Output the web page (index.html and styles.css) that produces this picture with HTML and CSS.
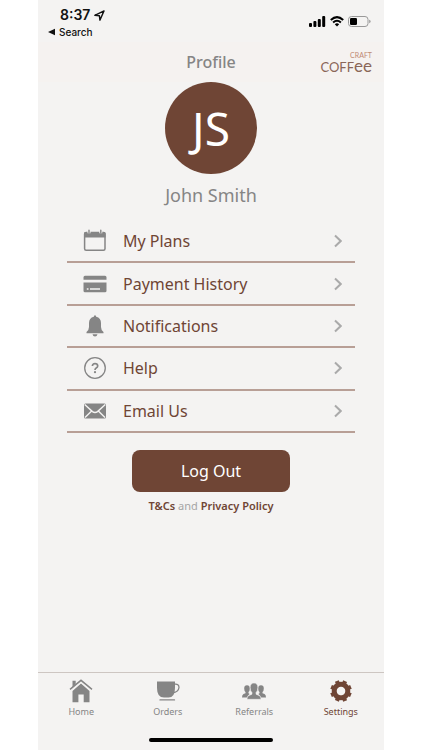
FILE: index.html
```html
<!DOCTYPE html>
<html lang="en">
<head>
<meta charset="utf-8">
<meta name="viewport" content="width=device-width, initial-scale=1">
<title>Profile</title>
<link rel="stylesheet" href="styles.css">
</head>
<body>
<div class="screen">
  <div class="status">
    <div class="status-left">
      <div class="clock">8:37
        <svg width="11" height="11" viewBox="0 0 11 11"><path d="M.8 5.3 10 .9 5.9 10.2 5.4 5.7Z" fill="none" stroke="#111" stroke-width="1.4" stroke-linejoin="round"/></svg>
      </div>
      <a class="back" href="#"><svg width="8" height="8" viewBox="0 0 8 8"><path d="M0 4 7 .8v6.4Z" fill="#111"/></svg>Search</a>
    </div>
    <div class="status-right">
      <svg width="17" height="11" viewBox="0 0 17 11"><g fill="#000"><rect x="0" y="7" width="3" height="4" rx="1"/><rect x="4.4" y="5" width="3" height="6" rx="1"/><rect x="8.8" y="3" width="3" height="8" rx="1"/><rect x="13.2" y="0" width="3" height="11" rx="1"/></g></svg>
      <svg width="14" height="11" viewBox="0 0 14 11"><g fill="none" stroke="#000" stroke-width="2"><path d="M.8 4Q7-1.8 13.2 4"/><path d="M3.1 6.5Q7 3 10.9 6.5"/></g><path d="M4.8 8.2Q7 6.5 9.2 8.2L7 10.6Z"/></svg>
      <svg width="23" height="11" viewBox="0 0 23 11"><rect x=".5" y=".5" width="19.5" height="10" rx="3" fill="none" stroke="#999"/><rect x="2" y="2" width="7" height="7" rx="1.2"/><path d="M21.2 3.8q1.4.3 1.4 1.7t-1.4 1.7Z" fill="#999"/></svg>
    </div>
  </div>
  <header class="header">
    <h1>Profile</h1>
    <div class="logo"><span class="logo-top">CRAFT</span><span class="logo-main">COFF<span class="logo-ee">ee</span></span></div>
  </header>
  <main class="main">
    <div class="avatar">JS</div>
    <h2 class="name">John Smith</h2>
    <ul class="menu">
      <li><a href="#"><svg class="icon" viewBox="0 0 24 24"><rect x="1.6" y="3.5" width="20.4" height="17.8" rx="1.5" fill="none" stroke="#858585" stroke-width="1.5"/><path d="M1 8.5V4.5Q1 3 2.5 3H21Q22.6 3 22.6 4.5V8.5Z" fill="#858585"/><path d="M6 1.8v2.4M17.8 1.8v2.4" stroke="#f4f3f2" stroke-width="3"/><path d="M6 1.3v2.4M17.8 1.3v2.4" stroke="#858585" stroke-width="1.4" stroke-linecap="round"/></svg><span>My Plans</span><svg class="chevron" viewBox="0 0 8 14"><path d="M1 1.5 6.7 7 1 12.5"/></svg></a></li>
      <li><a href="#"><svg class="icon" viewBox="0 0 24 24"><path d="M2 3.7H22Q23.5 3.7 23.5 5.2V7.7H.5V5.2Q.5 3.7 2 3.7ZM.5 10.5H23.5V18.7Q23.5 20.2 22 20.2H2Q.5 20.2.5 18.7Z" fill="#858585"/><path d="M3.8 17h1.7M7 17h10" stroke="#f4f3f2" stroke-width="1.3"/></svg><span>Payment History</span><svg class="chevron" viewBox="0 0 8 14"><path d="M1 1.5 6.7 7 1 12.5"/></svg></a></li>
      <li><a href="#"><svg class="icon" viewBox="0 0 24 24"><path d="M10.8 2.8Q10.8 1.2 12 1.2T13.2 2.8Q18 4 18 9V13Q18 16 20.5 18V19.3H3.5V18Q6 16 6 13V9Q6 4 10.8 2.8ZM9.5 20.3H14.5Q14 22.5 12 22.5T9.5 20.3Z" fill="#858585"/></svg><span>Notifications</span><svg class="chevron" viewBox="0 0 8 14"><path d="M1 1.5 6.7 7 1 12.5"/></svg></a></li>
      <li><a href="#"><svg class="icon" viewBox="0 0 24 24"><g fill="none" stroke="#858585"><circle cx="12" cy="12" r="10.3" stroke-width="1.3"/><path d="M9.4 10Q9.4 7.7 12 7.7T14.7 9.9Q14.7 11.2 13.2 12 12 12.7 12 14" stroke-width="1.7"/></g><circle cx="12" cy="16.2" r="1.1" fill="#858585"/></svg><span>Help</span><svg class="chevron" viewBox="0 0 8 14"><path d="M1 1.5 6.7 7 1 12.5"/></svg></a></li>
      <li><a href="#"><svg class="icon" viewBox="0 0 24 24"><rect x="1" y="4.5" width="22" height="15" rx="1.5" fill="#858585"/><path d="M1.7 5.6 9.5 12.6Q12 14.5 14.5 12.6L22.3 5.6M2 18.5 8.4 12.2M22 18.5 15.6 12.2" fill="none" stroke="#f4f3f2" stroke-width="1.4"/></svg><span>Email Us</span><svg class="chevron" viewBox="0 0 8 14"><path d="M1 1.5 6.7 7 1 12.5"/></svg></a></li>
    </ul>
    <button class="logout" type="button">Log Out</button>
    <p class="legal"><a href="#">T&amp;Cs</a> and <a href="#">Privacy Policy</a></p>
  </main>
  <nav class="tabs">
    <a href="#"><svg viewBox="0 0 24 24"><path d="M12 4.5 20.5 12V23.3H14.7V15.5H9.4V23.3H3.5V12Z"/><path d="M3.5 1.8H6.7V5L3.5 8Z"/><path d="M1 10.4 12 1.3 23 10.4" fill="none" stroke="#858585" stroke-width="1.5"/><path d="M1.8 11.9 12 3.5 22.2 11.9" fill="none" stroke="#f4f3f2" stroke-width=".9"/></svg>Home</a>
    <a href="#"><svg viewBox="0 0 24 24"><path d="M1 2.5H19V9Q19 18.5 12.5 18.5H8Q1 18.5 1 9Z"/><path d="M18.5 5.2Q23 4.5 23 8.5 22.5 13 16.5 14" fill="none" stroke="#858585" stroke-width="1.3"/><path d="M4 20.9H18.5" stroke="#858585" stroke-width="1.3" stroke-linecap="round"/></svg>Orders</a>
    <a href="#"><svg viewBox="0 0 24 24"><path id="side" d="M5 6.2Q7.8 6.2 7.8 9.5 7.8 12.2 6.5 13V14.3L7.7 15Q5.5 16 5.1 18.5H0Q0 15.5 1.5 15L3.5 14.3V13Q2.2 12 2.2 9.5 2.2 6.2 5 6.2Z"/><use href="#side" transform="matrix(-1 0 0 1 24 0)"/><path d="M12 4Q15.8 4 15.8 8.5 15.8 12.2 14 13.5V15.2L17.5 16.8Q19 17.5 19 20.3H5Q5 17.5 6.5 16.8L10 15.2V13.5Q8.2 12.2 8.2 8.5 8.2 4 12 4Z" stroke="#f4f3f2" stroke-width=".5"/></svg>Referrals</a>
    <a class="active" href="#" aria-current="page"><svg viewBox="0 0 24 24"><g transform="rotate(22.5 12 12)" fill="none" stroke="#6f4535"><circle cx="12" cy="12" r="6.8" stroke-width="5"/><path d="M12 1.3v3M12 19.7v3M1.3 12h3M19.7 12h3M4.4 4.4l2.2 2.2M17.4 17.4l2.2 2.2M4.4 19.6l2.2-2.2M17.4 6.6l2.2-2.2" stroke-width="4.2"/></g></svg>Settings</a>
  </nav>
  <div class="home-bar"></div>
</div>
</body>
</html>
```
FILE: styles.css
```css
* { box-sizing: border-box; }
body {
  margin: 0;
  background: #fff;
  color: #858585;
  font-family: "Noto Sans", "Open Sans", sans-serif;
}
a { color: inherit; text-decoration: none; }
svg { display: block; flex: none; }
.screen {
  width: 82%;
  min-height: 100vh;
  margin: 0 auto;
  display: flex;
  flex-direction: column;
  background: #f4f3f2;
}
.status {
  display: flex;
  justify-content: space-between;
  padding: 6px 13px 0 10px;
  height: 42px;
  color: #111;
  font-family: Inter, sans-serif;
}
.clock {
  display: flex;
  align-items: center;
  gap: 4px;
  padding-left: 12px;
  font-size: 14px;
  font-weight: 600;
  line-height: 18px;
}
.back {
  display: flex;
  align-items: center;
  gap: 3px;
  font-size: 10px;
  font-weight: 500;
  line-height: 16px;
}
.status-right {
  display: flex;
  gap: 4px;
  padding-top: 10px;
}
.header {
  display: grid;
  grid-template-columns: 1fr auto 1fr;
  align-items: center;
  height: 40px;
  padding: 0 12px;
  background: #f5f2f0;
}
h1 {
  grid-column: 2;
  margin: 0;
  font-size: 16px;
  font-weight: 500;
}
.logo {
  display: flex;
  flex-direction: column;
  align-items: flex-end;
  font-family: Lato, sans-serif;
  font-weight: 400;
  color: #8a6658;
}
.logo-top { font-size: 7px; line-height: 8px; color: #c08a75; }
.logo-main { font-size: 13px; line-height: 14px; }
.logo-ee { font-size: 17px; }
.main {
  flex: 1;
  display: flex;
  flex-direction: column;
  align-items: center;
  padding: 0 29px;
}
.avatar {
  display: grid;
  place-items: center;
  width: 92px;
  height: 92px;
  border-radius: 50%;
  background: #6f4535;
  color: #fff;
  font-size: 46px;
  font-weight: 400;
}
.name {
  margin: 8px 0 13px;
  font-size: 18px;
  font-weight: 400;
  line-height: 26px;
}
.menu {
  display: grid;
  grid-auto-rows: 1fr;
  width: 100%;
  height: 212px;
  margin: 0;
  padding: 0;
  list-style: none;
}
.menu li { border-bottom: 2px solid #b89f96; }
.menu a {
  display: flex;
  align-items: center;
  height: 100%;
  padding: 0 13px 0 16px;
  color: #6f4535;
  font-size: 16px;
}
.menu span { flex: 1; padding-left: 16px; }
.icon { width: 24px; height: 24px; }
.chevron {
  width: 8px;
  height: 14px;
  fill: none;
  stroke: #aaa;
  stroke-width: 2;
}
.logout {
  width: 55%;
  height: 42px;
  margin-top: 17px;
  border: 0;
  border-radius: 8px;
  background: #6f4535;
  color: #fff;
  font: 400 16px "Noto Sans", sans-serif;
}
.legal {
  margin: 6px 0;
  color: #a5a5a5;
  font-size: 11px;
  line-height: 16px;
}
.legal a { color: #6f4535; font-weight: 600; }
.tabs {
  display: grid;
  grid-template-columns: repeat(4, 1fr);
  height: 66px;
  padding-top: 6px;
  border-top: 1px solid #cdc6c2;
}
.tabs a {
  display: flex;
  flex-direction: column;
  align-items: center;
  gap: 2px;
  font-size: 9px;
  line-height: 14px;
}
.tabs svg { width: 24px; height: 24px; fill: #858585; }
.tabs .active { color: #6f4535; }
.home-bar {
  align-self: center;
  width: 36%;
  height: 4px;
  margin-bottom: 8px;
  border-radius: 2px;
  background: #000;
}
```
